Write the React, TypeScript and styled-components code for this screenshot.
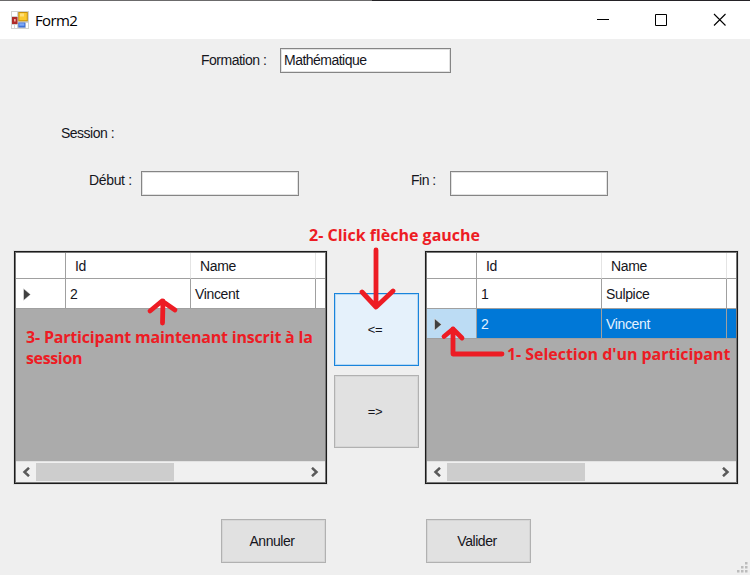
import React from 'react';
import styled, { createGlobalStyle } from 'styled-components';

const GlobalStyle = createGlobalStyle`
  *, *::before, *::after { box-sizing: border-box; }
  body { margin: 0; background: #efefef; }
`;

const Window = styled.div`
  position: relative;
  width: 750px;
  height: 575px;
  display: flex;
  flex-direction: column;
  overflow: hidden;
  background: #efefef;
  color: #15151c;
  font: 14px/16px 'Liberation Sans', Arial, sans-serif;
`;

const TitleBar = styled.header`
  height: 39px;
  flex: none;
  display: flex;
  align-items: center;
  padding: 0 0 0 11px;
  background:
    linear-gradient(90deg, #6b6a6b 372px, #242226 372px) 0 0 / 100% 1px no-repeat,
    #fff;
`;

const Title = styled.h1`
  flex: 1;
  margin: 0 0 0 6px;
  color: #000;
  font: 400 15px/20px 'Open Sans', 'Noto Sans', sans-serif;
  letter-spacing: -0.65px;
`;

const Controls = styled.div`
  display: flex;
  gap: 39px;
  padding: 1px 23px 0 0;
  svg { display: block; }
  svg:last-child { margin-left: 3px; }
`;

const Form = styled.main`
  flex: 1;
  display: flex;
  flex-direction: column;
`;

const Field = styled.label<{ $labelWidth: number }>`
  display: grid;
  grid-template-columns: ${(p) => p.$labelWidth}px auto;
  align-items: start;
`;

const Caption = styled.span<{ $spacing?: number; $top?: number }>`
  padding-top: ${(p) => p.$top ?? 4}px;
  white-space: nowrap;
  letter-spacing: ${(p) => p.$spacing ?? -0.5}px;
`;

const TextBox = styled.input<{ $width: number }>`
  width: ${(p) => p.$width}px;
  height: 25px;
  padding: 0 3px 2px;
  border: 1px solid #858585;
  box-shadow: inset 0 0 0 1px #e2e2e2;
  border-radius: 0;
  outline: none;
  background: #fff;
  color: #15151c;
  font: inherit;
  letter-spacing: -0.52px;
`;

const FormationRow = styled.div`
  display: flex;
  padding: 9px 0 0 201px;
`;

const SessionRow = styled.div`
  padding: 52px 0 0 61px;
  height: 98px;
`;

const DatesRow = styled.div`
  display: flex;
  gap: 112px;
  padding: 0 0 0 89px;
`;

const Transfer = styled.section`
  display: flex;
  margin: 55px 0 0 14px;
  height: 233px;
`;

const Grid = styled.div`
  width: 313px;
  display: flex;
  flex-direction: column;
  border: 1px solid #1c1c1c;
  outline: 1px solid rgba(0, 0, 0, 0.06);
  background: #ababab;
  box-shadow: inset 0 0 0 1px #777;
  padding: 1px;
  font-size: 14px;
`;

const GridRow = styled.div<{ $selected?: boolean; $header?: boolean }>`
  display: grid;
  grid-template-columns: 50px 125px 125px 1fr;
  height: ${(p) => (p.$header ? 26 : 30)}px;
  flex: none;
  background: ${(p) => (p.$selected ? '#0078d7' : '#fff')};
  color: ${(p) => (p.$selected ? '#e4f2ff' : '#15151c')};
  letter-spacing: -0.35px;
`;

const Cell = styled.div<{ $header?: boolean; $marker?: boolean; $active?: boolean }>`
  display: flex;
  align-items: center;
  padding-left: ${(p) => (p.$marker ? 6 : p.$header ? 9 : 4)}px;
  border-right: 1px solid ${(p) => (p.$header && !p.$marker ? '#e4e4e4' : '#a0a0a0')};
  border-bottom: 1px solid #a0a0a0;
  background: ${(p) => (p.$active ? '#bcdcf4' : 'transparent')};
  &:last-child { border-right: 0; }
`;

const Space = styled.div`
  flex: 1;
`;

const ScrollBar = styled.div`
  height: 21px;
  flex: none;
  display: grid;
  grid-template-columns: 20px 138px 1fr 20px;
  align-items: center;
  justify-items: center;
  border-top: 1px solid #e2e2e2;
  background: #f0f0f0;
`;

const Thumb = styled.div`
  grid-column: 2;
  justify-self: stretch;
  height: 18px;
  background: #cdcdcd;
`;

const ScrollEnd = styled.div`
  grid-column: 4;
`;

const MoveButtons = styled.div`
  width: 98px;
  padding: 42px 6px 0 7px;
  display: flex;
  flex-direction: column;
  gap: 9px;
`;

const PushButton = styled.button<{ $focus?: boolean; $w: number; $h: number }>`
  width: ${(p) => p.$w}px;
  height: ${(p) => p.$h}px;
  flex: none;
  padding: 0 3px 0 0;
  border: 1px solid ${(p) => (p.$focus ? '#1984dc' : '#b1b1b1')};
  box-shadow: inset 0 0 0 1px ${(p) => (p.$focus ? '#b5d8f4' : '#d6d6d6')};
  border-radius: 0;
  background: ${(p) => (p.$focus ? '#e5f1fb' : '#e1e1e1')};
  color: #15151c;
  font: inherit;
  letter-spacing: -0.45px;
`;

const MoveLabel = styled.span`
  font-size: 13px;
  letter-spacing: -0.3px;
`;

const Footer = styled.footer`
  display: flex;
  gap: 100px;
  padding: 35px 0 0 221px;
`;

const Grip = styled.svg`
  position: absolute;
  right: 2px;
  bottom: 2px;
`;

const Overlay = styled.svg`
  position: absolute;
  inset: 0;
  pointer-events: none;
`;

const Note = styled.p<{ $x: number; $y: number; $w: number }>`
  position: absolute;
  left: ${(p) => p.$x}px;
  top: ${(p) => p.$y}px;
  width: ${(p) => p.$w}px;
  margin: 0;
  color: #ed1c24;
  font: 700 16px/21px 'Open Sans', 'Noto Sans', sans-serif;
`;

const NoteLine = styled.span<{ $spacing: number }>`
  display: block;
  white-space: nowrap;
  letter-spacing: ${(p) => p.$spacing}px;
`;

const FormIcon = () => (
  <svg width="18" height="18" viewBox="0 0 18 18">
    <rect width="18" height="18" fill="#d2d2d0" />
    <path d="M1 1h5v4H1zM1 14h2v3H1zM4 14h2v3H4zM15 12h2v5h-2z" fill="#fff" />
    <rect x="1" y="6" width="5.5" height="7" fill="#b02a28" />
    <rect x="3" y="8" width="1.7" height="2.5" fill="#f0aaa0" />
    <rect x="7.3" y="1" width="9.5" height="9.3" fill="#c89108" />
    <rect x="8.3" y="2" width="7.5" height="7.3" fill="#fbc92e" />
    <rect x="9" y="2.5" width="4" height="3" fill="#ffe07a" />
    <rect x="7.3" y="11.5" width="7" height="5" fill="#3f72d8" />
    <rect x="8.3" y="12.3" width="5" height="2.4" fill="#80aafa" />
  </svg>
);

const Chevron = ({ right }: { right?: boolean }) => (
  <svg width="10" height="10" viewBox="0 0 10 10" display="block">
    <path
      d={right ? 'M2 .8L6.500 5 2 9.200' : 'M8 .8L3.500 5 8 9.200'}
      fill="none"
      stroke="#5a5a5a"
      strokeWidth="2.5"
    />
  </svg>
);

const Marker = () => (
  <svg width="10" height="14" viewBox="0 0 10 14">
    <path d="M1.500 1.500L8.500 7.500l-7 6z" fill="#404040" stroke="#f4f4f4" strokeWidth=".5" />
  </svg>
);

type Person = { id: number; name: string; current?: boolean; selected?: boolean };

const DataGrid = ({ people }: { people: Person[] }) => (
  <Grid>
    <GridRow $header>
      <Cell $header $marker />
      <Cell $header>Id</Cell>
      <Cell $header>Name</Cell>
      <Cell $header />
    </GridRow>
    {people.map((p) => (
      <GridRow key={p.id} $selected={p.selected}>
        <Cell $marker $active={p.selected}>
          {p.current && <Marker />}
        </Cell>
        <Cell>{p.id}</Cell>
        <Cell>{p.name}</Cell>
        <Cell />
      </GridRow>
    ))}
    <Space />
    <ScrollBar>
      <Chevron />
      <Thumb />
      <ScrollEnd>
        <Chevron right />
      </ScrollEnd>
    </ScrollBar>
  </Grid>
);

export default function App() {
  return (
    <Window>
      <GlobalStyle />
      <TitleBar>
        <FormIcon />
        <Title>Form2</Title>
        <Controls>
          <svg width="19" height="14" viewBox="0 0 19 14">
            <path d="M3 6.500h12" stroke="#000" />
          </svg>
          <svg width="19" height="14" viewBox="0 0 19 14">
            <path d="M3.500 1.500h11v11h-11z" fill="none" stroke="#000" />
          </svg>
          <svg width="14" height="14" viewBox="0 0 14 14">
            <path d="M1 1l11.500 11.500M12.500 1L1 12.500" stroke="#000" strokeWidth="1.1" />
          </svg>
        </Controls>
      </TitleBar>
      <Form>
        <FormationRow>
          <Field $labelWidth={79}>
            <Caption>Formation :</Caption>
            <TextBox $width={171} defaultValue="Mathématique" />
          </Field>
        </FormationRow>
        <SessionRow>
          <Caption>Session :</Caption>
        </SessionRow>
        <DatesRow>
          <Field $labelWidth={52}>
            <Caption $spacing={-0.35} $top={1}>Début :</Caption>
            <TextBox $width={158} />
          </Field>
          <Field $labelWidth={39}>
            <Caption $top={1}>Fin :</Caption>
            <TextBox $width={158} />
          </Field>
        </DatesRow>
        <Transfer>
          <DataGrid people={[{ id: 2, name: 'Vincent', current: true }]} />
          <MoveButtons>
            <PushButton $focus $w={85} $h={73}>
              <MoveLabel>&lt;=</MoveLabel>
            </PushButton>
            <PushButton $w={85} $h={73}>
              <MoveLabel>=&gt;</MoveLabel>
            </PushButton>
          </MoveButtons>
          <DataGrid
            people={[
              { id: 1, name: 'Sulpice' },
              { id: 2, name: 'Vincent', current: true, selected: true },
            ]}
          />
        </Transfer>
        <Footer>
          <PushButton $w={105} $h={44}>Annuler</PushButton>
          <PushButton $w={105} $h={44}>Valider</PushButton>
        </Footer>
      </Form>
      <Grip width="11" height="11" viewBox="0 0 11 11" fill="#bcbcbc">
        <path d="M8 0h2.500v2.500H8zM4 4h2.500v2.500H4zM8 4h2.500v2.500H8zM0 8h2.500v2.500H0zM4 8h2.500v2.500H4zM8 8h2.500v2.500H8z" />
      </Grip>
      <Overlay
        width="750"
        height="575"
        viewBox="0 0 750 575"
        fill="none"
        stroke="#ed1c24"
        strokeWidth="4.8"
        strokeLinecap="round"
        strokeLinejoin="round"
      >
        <path d="M376 250V307M362 292l14 15 17-16" />
        <path d="M162.500 323l.5-22M150 311l12-10 13 9" />
        <path d="M502 354h-49V329M444 336.500l9-7.500 9 9" />
      </Overlay>
      <Note $x={309} $y={225} $w={180}>
        <NoteLine $spacing={0}>2- Click flèche gauche</NoteLine>
      </Note>
      <Note $x={26} $y={327} $w={295}>
        <NoteLine $spacing={-0.19}>3- Participant maintenant inscrit à la</NoteLine>
        <NoteLine $spacing={-0.36}>session</NoteLine>
      </Note>
      <Note $x={507} $y={344} $w={230}>
        <NoteLine $spacing={-0.04}>1- Selection d'un participant</NoteLine>
      </Note>
    </Window>
  );
}
